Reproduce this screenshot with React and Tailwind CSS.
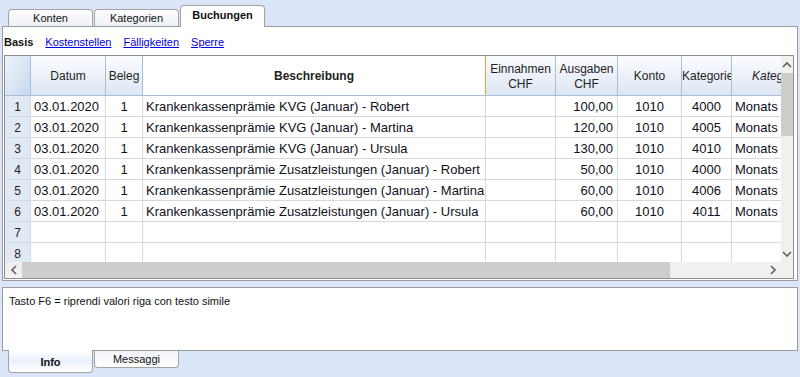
import React from 'react';

const rows = [
  ['03.01.2020', '1', 'Krankenkassenprämie KVG (Januar) - Robert', '', '100,00', '1010', '4000', 'Monats'],
  ['03.01.2020', '1', 'Krankenkassenprämie KVG (Januar) - Martina', '', '120,00', '1010', '4005', 'Monats'],
  ['03.01.2020', '1', 'Krankenkassenprämie KVG (Januar) - Ursula', '', '130,00', '1010', '4010', 'Monats'],
  ['03.01.2020', '1', 'Krankenkassenprämie Zusatzleistungen (Januar) - Robert', '', '50,00', '1010', '4000', 'Monats'],
  ['03.01.2020', '1', 'Krankenkassenprämie Zusatzleistungen (Januar) - Martina', '', '60,00', '1010', '4006', 'Monats'],
  ['03.01.2020', '1', 'Krankenkassenprämie Zusatzleistungen (Januar) - Ursula', '', '60,00', '1010', '4011', 'Monats'],
  ['', '', '', '', '', '', '', ''],
  ['', '', '', '', '', '', '', ''],
];

const cols = 'grid grid-cols-[26px_75px_37px_343px_70px_62px_64px_50px_49px]';

// alignment per data column
const align = [
  'justify-start pl-[3px]',
  'justify-center',
  'justify-start pl-[3px]',
  'justify-end pr-[4px]',
  'justify-end pr-[4px]',
  'justify-center',
  'justify-center',
  'justify-start pl-[3px]',
];

function Chevron({ dir }) {
  const pts = {
    up: '1,6 5,2 9,6',
    down: '1,2 5,6 9,2',
    left: '6,1 2,5 6,9',
    right: '2,1 6,5 2,9',
  }[dir];
  const vertical = dir === 'up' || dir === 'down';
  return (
    <svg width={vertical ? 10 : 8} height={vertical ? 8 : 10} viewBox={vertical ? '0 0 10 8' : '0 0 8 10'}>
      <polyline points={pts} fill="none" stroke="#606060" strokeWidth="1.6" />
    </svg>
  );
}

function HeadCell({ children, className = '' }) {
  return (
    <div
      className={`flex items-center justify-center text-center pt-[2px] border-r border-[#a9bdd8] bg-gradient-to-b from-[#fbfcfe] to-[#dde6f3] text-[12px] leading-[15px] text-[#1e1e1e] overflow-hidden ${className}`}
    >
      {children}
    </div>
  );
}

export default function App() {
  return (
    <div className="w-[800px] h-[377px] bg-[#dbe5f8] flex flex-col overflow-hidden font-['Liberation_Sans',Arial,sans-serif] text-[#111]">
      {/* top tabs */}
      <div className="h-[26px] flex items-end pl-[8px] gap-[1px] relative z-10">
        <div className="w-[85px] h-[17px] rounded-t-[4px] border border-b-0 border-[#a3a3a3] bg-gradient-to-b from-[#fdfdfe] to-[#eef1f6] flex items-center justify-center text-[11px]">
          Konten
        </div>
        <div className="w-[85px] h-[17px] rounded-t-[4px] border border-b-0 border-[#a3a3a3] bg-gradient-to-b from-[#fdfdfe] to-[#eef1f6] flex items-center justify-center text-[11px]">
          Kategorien
        </div>
        <div className="w-[85px] h-[22px] mb-[-1px] rounded-t-[4px] border border-b-0 border-[#a3a3a3] bg-white flex items-center justify-center pb-[2px] text-[11px] font-bold">
          Buchungen
        </div>
      </div>

      {/* main panel */}
      <div className="mx-[2px] h-[255px] border border-[#9c9c9c] bg-white flex flex-col">
        <div className="h-[28px] flex items-center gap-[12px] pl-[1px] pt-[2px] text-[11px]">
          <span className="font-bold">Basis</span>
          <span className="text-[#0000e0] underline">Kostenstellen</span>
          <span className="text-[#0000e0] underline">Fälligkeiten</span>
          <span className="text-[#0000e0] underline">Sperre</span>
        </div>

        {/* grid */}
        <div className="ml-[1px] w-[790px] h-[224px] border border-[#8f8f8f] flex flex-col">
          <div className="flex h-[206px]">
            <div className="w-[776px] flex flex-col overflow-hidden">
              <div className={`${cols} h-[40px] shrink-0 border-b border-[#a9bdd8]`}>
                <div className="border-r border-[#a9bdd8] bg-gradient-to-br from-[#eef3fb] via-[#dce6f4] to-[#c8d7ee]" />
                <HeadCell>Datum</HeadCell>
                <HeadCell>Beleg</HeadCell>
                <HeadCell className="!bg-none bg-gradient-to-b !from-[#f9dca2] !to-[#f5c672] !border-[#f0a040] font-bold">
                  Beschreibung
                </HeadCell>
                <HeadCell>
                  Einnahmen
                  <br />
                  CHF
                </HeadCell>
                <HeadCell>
                  Ausgaben
                  <br />
                  CHF
                </HeadCell>
                <HeadCell>Konto</HeadCell>
                <HeadCell className="!justify-start whitespace-nowrap">Kategorie</HeadCell>
                <HeadCell className="!justify-start pl-[20px] whitespace-nowrap italic !border-r-0">Kateg</HeadCell>
              </div>
              {rows.map((r, i) => (
                <div key={i} className={`${cols} h-[21px] shrink-0`}>
                  <div className="flex items-center justify-center pt-[1px] border-r border-b border-[#d3dbe6] bg-[#e1e9f5] text-[12px] text-[#222]">
                    {i + 1}
                  </div>
                  {r.map((v, j) => (
                    <div
                      key={j}
                      className={`flex items-center ${align[j]} pt-[1px] border-r border-b border-[#d8d8d8] text-[13px] text-[#10101a] whitespace-nowrap overflow-hidden ${j === 7 ? 'border-r-0' : ''}`}
                    >
                      {v}
                    </div>
                  ))}
                </div>
              ))}
            </div>
            {/* vertical scrollbar */}
            <div className="w-[12px] bg-[#f0f0f0] flex flex-col items-center">
              <div className="h-[16px] flex items-center justify-center pt-[2px]">
                <Chevron dir="up" />
              </div>
              <div className="mt-[1px] w-[12px] h-[63px] bg-[#cdcdcd]" />
              <div className="flex-1" />
              <div className="h-[16px] flex items-center justify-center">
                <Chevron dir="down" />
              </div>
            </div>
          </div>
          {/* horizontal scrollbar */}
          <div className="h-[16px] flex bg-[#f0f0f0]">
            <div className="w-[17px] flex items-center justify-center">
              <Chevron dir="left" />
            </div>
            <div className="w-[648px] bg-[#cdcdcd]" />
            <div className="flex-1" />
            <div className="w-[16px] flex items-center justify-center">
              <Chevron dir="right" />
            </div>
            <div className="w-[12px]" />
          </div>
        </div>
      </div>

      {/* info panel */}
      <div className="mx-[2px] mt-[6px] h-[64px] border border-[#9c9c9c] bg-white pl-[6px] pt-[7px] text-[11px] leading-[13px]">
        Tasto F6 = riprendi valori riga con testo simile
      </div>

      {/* bottom tabs */}
      <div className="flex items-start pl-[8px] gap-[1px] relative">
        <div className="w-[85px] h-[23px] mt-[-1px] rounded-b-[4px] border border-t-0 border-[#a3a3a3] bg-gradient-to-b from-white via-[#eaf0fb] to-white flex items-center justify-center pt-[2px] text-[11px] font-bold">
          Info
        </div>
        <div className="w-[85px] h-[17px] rounded-b-[4px] border border-t-0 border-[#a3a3a3] bg-gradient-to-b from-[#f1f4f9] to-[#fdfdfe] flex items-center justify-center text-[11px]">
          Messaggi
        </div>
      </div>
    </div>
  );
}
